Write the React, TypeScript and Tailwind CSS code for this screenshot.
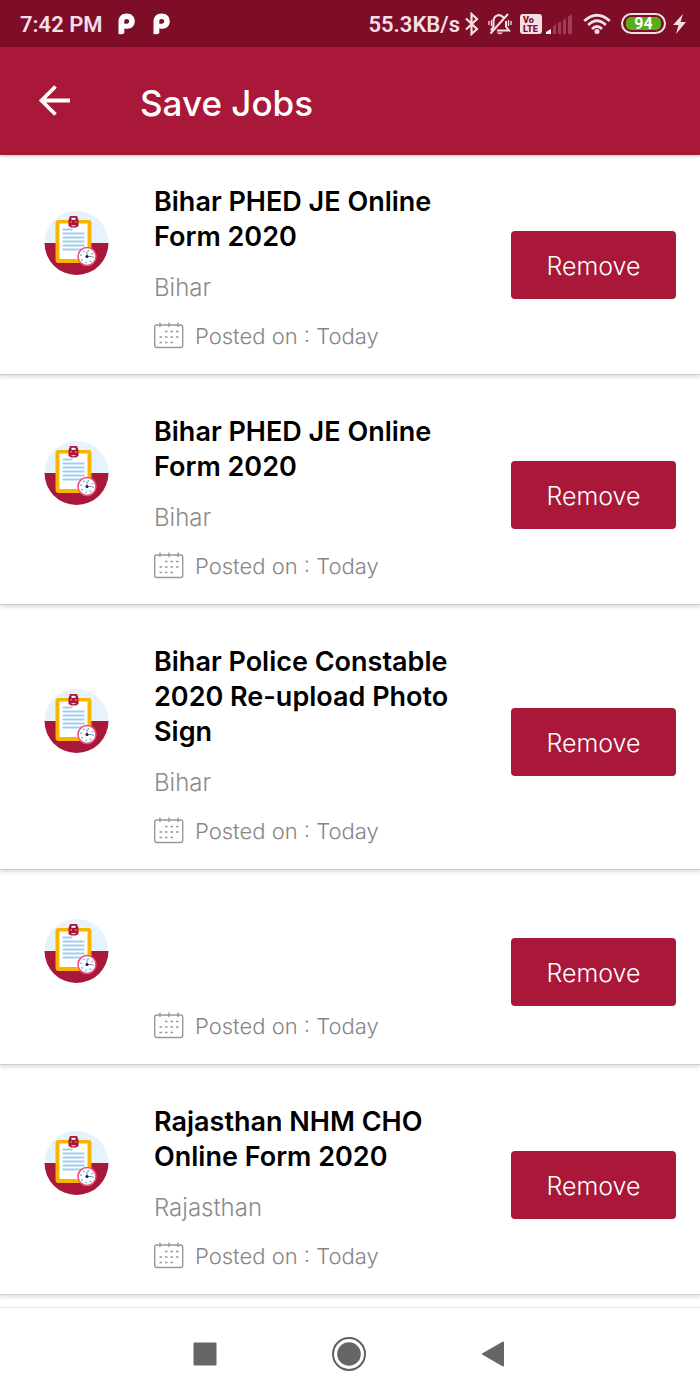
type Job = { id: number; title: string; state: string; posted: string };

const jobs: Job[] = [
  { id: 1, title: "Bihar PHED JE Online Form 2020", state: "Bihar", posted: "Today" },
  { id: 2, title: "Bihar PHED JE Online Form 2020", state: "Bihar", posted: "Today" },
  { id: 3, title: "Bihar Police Constable 2020 Re-upload Photo Sign", state: "Bihar", posted: "Today" },
  { id: 4, title: "", state: "", posted: "Today" },
  { id: 5, title: "Rajasthan NHM CHO Online Form 2020", state: "Rajasthan", posted: "Today" },
];

function PIcon() {
  return (
    <svg width="17" height="22" viewBox="0 0 17 22" aria-hidden="true">
      <path
        fill="#fff"
        fillRule="evenodd"
        d="M0.500 21V8.500C0.500 3.800 3.600 0.500 8.700 0.500S16.800 3.800 16.800 8.300 13.600 15.800 9.500 15.800c-1.400 0-2.400-.2-3.200-.6V20q-1.200 1.200-3 1.200ZM8.700 6C7.100 6 6.300 6.900 6.300 8.300v2.500h2.500c1.500 0 2.400-1 2.400-2.500S10.200 6 8.700 6Z"
      />
    </svg>
  );
}

function StatusBar() {
  return (
    <div className="flex h-[47px] items-center justify-between bg-[#7e0e28] pr-[14px] pl-5 font-['Roboto',sans-serif] text-[22px] font-semibold text-[#f3dfe5]">
      <div className="flex items-center pt-px">
        <span>7:42 PM</span>
        <span className="ml-[15px] flex items-center gap-[18px]">
          <PIcon />
          <PIcon />
        </span>
      </div>
      <div className="flex items-center pt-px">
        <span>55.3KB/s</span>
        <svg className="ml-1" width="16" height="24" viewBox="0 0 16 24" fill="none" stroke="currentColor" strokeWidth="2.200" aria-hidden="true">
          <path d="M2 6.500l11 10.500-5.500 5V2L13 7 2 17.500" />
        </svg>
        <svg className="ml-2" width="24" height="24" viewBox="0 0 24 24" fill="none" stroke="currentColor" strokeWidth="2" aria-hidden="true">
          <path d="M15.500 5.500C11 .5 5.500 4.500 5.500 9v5.500L3 18.500M18 9v5.500l3 4H9M2.500 21.500L20 2" />
          <path d="M1 9v4M3.500 8v6M20.500 8v6M23 9v4" strokeWidth="1.300" />
          <path d="M8.500 20.500h6.500Q12 24 8.500 20.500z" fill="currentColor" stroke="none" />
        </svg>
        <svg className="ml-2" width="22" height="20" viewBox="0 0 22 20" aria-hidden="true">
          <rect width="22" height="20" rx="3" fill="#f3dfe5" />
          <text x="3" y="9" fontFamily="Roboto" fontSize="9" fontWeight="900" fill="#7e0e28">Vo</text>
          <text x="3" y="18" fontFamily="Roboto" fontSize="9" fontWeight="900" fill="#7e0e28">LTE</text>
        </svg>
        <svg className="ml-1" width="28" height="20" viewBox="0 0 28 20" aria-hidden="true">
          <path d="M0 20v-2l5-3v5z" fill="#fff" />
          <path d="M7 20v-8l3-1.500V20zM12 20V9l3-1.500V20zM17 20V6l3-1.500V20zM22 20V3l4-3v20z" fill="#a03c55" />
        </svg>
        <svg className="ml-[9px]" width="28" height="22" viewBox="0 0 28 22" fill="none" stroke="currentColor" strokeWidth="2.800" aria-hidden="true">
          <path d="M1.200 8Q14-3.500 26.800 8M5.200 12Q14 3.500 22.800 12M9 16Q14 11 19 16" />
          <circle cx="14" cy="18.500" r="2.500" fill="currentColor" stroke="none" />
        </svg>
        <svg className="ml-[10px]" width="45" height="22" viewBox="0 0 45 22" aria-hidden="true">
          <rect x="1" y="1" width="43" height="19" rx="9.500" fill="none" stroke="#f3dfe5" strokeWidth="2" />
          <rect x="5" y="4" width="35" height="13" rx="5" fill="#58ae18" />
          <text x="22.500" y="16" textAnchor="middle" fontFamily="Roboto" fontSize="16" fontWeight="700" fill="#fff">94</text>
        </svg>
        <svg className="ml-[7px]" width="13" height="20" viewBox="0 0 13 20" aria-hidden="true">
          <path d="M10 0L0 11h5.500L3 20 13 8H7.500z" fill="currentColor" />
        </svg>
      </div>
    </div>
  );
}

function JobIcon() {
  return (
    <svg width="65" height="65" viewBox="0 0 65 65" aria-hidden="true">
      <path d="M0.500 32a32 32 0 0 1 64 0z" fill="#e6f2fc" />
      <path d="M0.500 32a32 32 0 0 0 64 0z" fill="#a91739" />
      <rect x="11.500" y="9" width="36" height="43" rx="3" fill="#f7b500" />
      <rect x="15.500" y="12.500" width="28" height="35.500" fill="#fff" />
      <path d="M18.500 18.500h10M18.500 22.500h22M18.500 26.500h22M18.500 30.500h22M18.500 34.500h22M18.500 38.500h19" stroke="#a4cdec" strokeWidth="1.800" />
      <path d="M26 5h7l1.500 4v6L32 16.500h-5L24.500 15V9z" fill="#a91739" />
      <path d="M27.500 6.800h4v2h-4z" fill="#fff" />
      <path d="M27.500 14h4v1.200h-4z" fill="#f3c4cf" />
      <path d="M26.500 11h1.500M31 11h1.500" stroke="#f09030" strokeWidth="1.500" />
      <circle cx="43" cy="45.500" r="9" fill="#fff" stroke="#f04b7b" strokeWidth="1.500" />
      <circle cx="43" cy="45.500" r="6" fill="none" stroke="#4cc3dc" strokeWidth="1.600" strokeDasharray="1.500 3.212" />
      <path d="M43 40v5.500h5" fill="none" stroke="#8c8ca8" strokeWidth="1" />
      <circle cx="43" cy="45.500" r="1.500" fill="#1d1552" />
    </svg>
  );
}

function CalendarIcon() {
  return (
    <svg width="30" height="28" viewBox="0 0 30 28" fill="none" stroke="#989898" aria-hidden="true">
      <rect x="0.700" y="3" width="28" height="22.500" rx="2" strokeWidth="1.400" />
      <path d="M6 0.500v4.500M15 0.500v4.500M24 0.500v4.500" strokeWidth="1.400" />
      <path d="M11 9.500h2.500M16.500 9.500h2.500M22 9.500h2.500M5.500 15h2.500M11 15h2.500M16.500 15h2.500M22 15h2.500M5.500 20.500h2.500M11 20.500h2.500M16.500 20.500h2.500" strokeWidth="1.500" />
    </svg>
  );
}

function JobCard({ job }: { job: Job }) {
  return (
    <li className="flex items-center border-b border-[#d2d2d2] pr-6 pl-11">
      <div className="shrink-0 pb-8">
        <JobIcon />
      </div>
      <div className="ml-[45px] flex min-w-0 flex-1 flex-col pt-[39px] pb-[23px]">
        <h2 className="min-h-[35px] max-w-[310px] text-[27px] leading-[35px] font-semibold text-black">{job.title}</h2>
        <p className="mt-[18px] h-[31px] text-[24px] leading-[31px] font-light text-[#8b8b8b]">{job.state}</p>
        <p className="mt-[18px] flex items-center gap-[11px] text-[22px] leading-[30px] font-light text-[#858585]">
          <CalendarIcon />
          <span>Posted on : {job.posted}</span>
        </p>
      </div>
      <div className="shrink-0 pt-[10px]">
        <button type="button" className="h-[68px] w-[165px] rounded bg-[#a91739] pt-1 text-[25px] font-light text-white">
          Remove
        </button>
      </div>
    </li>
  );
}

export default function App() {
  return (
    <div className="flex min-h-screen flex-col bg-white font-['Inter',sans-serif]">
      <header className="relative z-10 shadow-[0_1px_3px_rgba(0,0,0,0.25)]">
        <StatusBar />
        <div className="flex h-[108px] items-center bg-[#a91739] pl-[38px] text-white">
          <button type="button" aria-label="Back">
            <svg width="33" height="32" viewBox="0 0 33 32" fill="none" stroke="currentColor" strokeWidth="3.800" aria-hidden="true">
              <path d="M17.500 1.500L3.500 15.500l14 14M3.500 15.500h28.500" />
            </svg>
          </button>
          <h1 className="ml-[69px] pt-1 text-[35px] font-medium">Save Jobs</h1>
        </div>
      </header>
      <main className="-mt-[10px] flex-1 pb-[10px]">
        <ul className="[&>li]:shadow-[0_2px_4px_rgba(0,0,0,0.14)]">
          {jobs.map((job) => (
            <JobCard key={job.id} job={job} />
          ))}
        </ul>
      </main>
      <nav className="flex h-[93px] justify-center border-t border-[#e6e6e6] bg-white pr-[3px]" aria-label="System">
        <div className="grid w-[432px] grid-cols-3 place-items-center">
          <button type="button" aria-label="Recent apps">
            <svg width="24" height="24" viewBox="0 0 24 24" aria-hidden="true">
              <rect x="0.500" y="0.500" width="23" height="23" rx="1" fill="#666" />
            </svg>
          </button>
          <button type="button" aria-label="Home">
            <svg width="36" height="36" viewBox="0 0 36 36" aria-hidden="true">
              <circle cx="18" cy="18" r="16" fill="none" stroke="#606060" strokeWidth="2" />
              <circle cx="18" cy="18" r="11.800" fill="#666" />
            </svg>
          </button>
          <button type="button" aria-label="Previous">
            <svg width="24" height="26" viewBox="0 0 24 26" aria-hidden="true">
              <path d="M22 1.500v23L2 13z" fill="#666" stroke="#666" strokeWidth="2" strokeLinejoin="round" />
            </svg>
          </button>
        </div>
      </nav>
    </div>
  );
}
